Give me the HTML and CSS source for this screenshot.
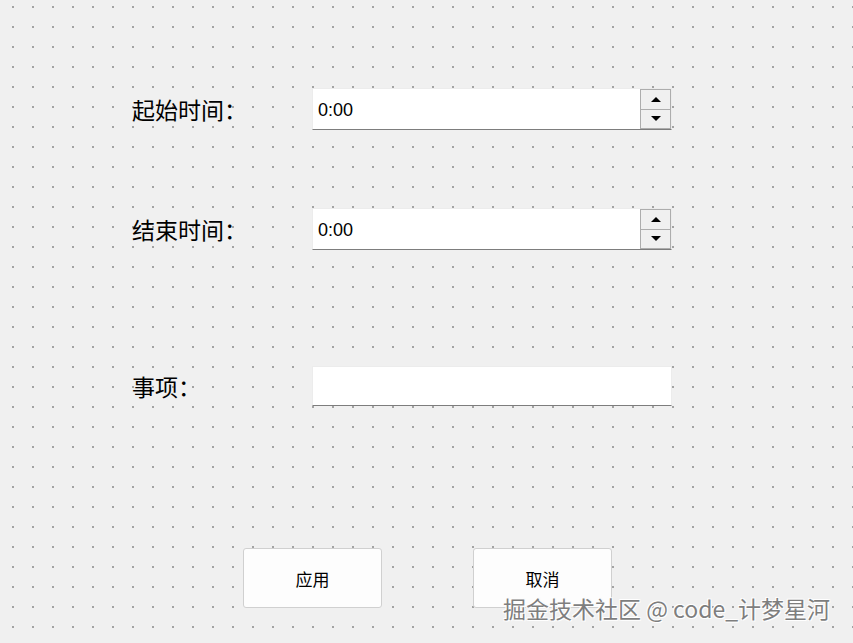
FILE: index.html
```html
<!DOCTYPE html>
<html lang="zh-CN">
<head>
    <meta charset="UTF-8">
    <title>事项设置</title>
    <link rel="stylesheet" href="styles.css">
</head>
<body>
<main class="form">
    <div class="row row-start">
        <label class="label">起始时间：</label>
        <div class="field">
            <input class="field-input" type="text" value="0:00">
            <div class="spin">
                <span class="spin-btn"><i class="arrow up"></i></span>
                <span class="spin-btn"><i class="arrow down"></i></span>
            </div>
        </div>
    </div>
    <div class="row row-end">
        <label class="label">结束时间：</label>
        <div class="field">
            <input class="field-input" type="text" value="0:00">
            <div class="spin">
                <span class="spin-btn"><i class="arrow up"></i></span>
                <span class="spin-btn"><i class="arrow down"></i></span>
            </div>
        </div>
    </div>
    <div class="row row-item">
        <label class="label">事项：</label>
        <div class="field field-plain">
            <input class="field-input" type="text" value="">
        </div>
    </div>
    <div class="actions">
        <button class="button">应用</button>
        <button class="button">取消</button>
    </div>
</main>
<p class="watermark">掘金技术社区 @ code_计梦星河</p>
</body>
</html>
```

FILE: styles.css
```css
html, body {
    height: 100%;
}
body {
    margin: 0;
    padding: 0;
    background-color: #f0f0f0;
    background-image: conic-gradient(at 2px 2px, transparent 75%, #a3a3a3 0);
    background-size: 20px 20px;
    background-position: 12px 6px;
    font-family: 'Noto Sans CJK SC', sans-serif;
    color: #000;
    position: relative;
    overflow: hidden;
}
.form {
    padding: 88px 0 0 132px;
}
.row {
    display: flex;
    align-items: center;
    height: 42px;
}
.row-start {
    margin-bottom: 78px;
}
.row-end {
    margin-bottom: 116px;
}
.row-item {
    height: 40px;
}
.label {
    width: 180px;
    font-size: 23px;
    line-height: 1;
}
.field {
    position: relative;
    width: 360px;
    height: 100%;
    box-sizing: border-box;
    background: #fff;
    border: 1px solid #ececec;
    border-bottom-color: #7d7d7d;
}
.field-input {
    width: 100%;
    height: 100%;
    box-sizing: border-box;
    border: none;
    outline: none;
    background: transparent;
    padding: 2px 0 0 5px;
    font-family: 'Liberation Sans', sans-serif;
    font-size: 18px;
    color: #000;
}
.spin {
    position: absolute;
    top: 0;
    right: 0;
    width: 31px;
    height: 40px;
    box-sizing: border-box;
    border: 1px solid #adadad;
    display: flex;
    flex-direction: column;
}
.spin-btn {
    flex: 1;
    display: flex;
    justify-content: center;
    align-items: center;
    background: #f0f0f0;
}
.spin-btn + .spin-btn {
    border-top: 1px solid #adadad;
}
.arrow {
    width: 0;
    height: 0;
    border-left: 5px solid transparent;
    border-right: 5px solid transparent;
}
.arrow.up {
    border-bottom: 5px solid #000;
}
.arrow.down {
    border-top: 5px solid #000;
}
.actions {
    display: flex;
    gap: 91px;
    margin: 142px 0 0 111px;
}
.button {
    width: 139px;
    height: 60px;
    background: #fdfdfd;
    border: 1px solid #d0d0d0;
    border-radius: 3px;
    font-family: 'Noto Sans CJK SC', sans-serif;
    font-size: 17px;
    color: #000;
    padding: 0;
}
.watermark {
    position: absolute;
    left: 503px;
    top: 594px;
    margin: 0;
    font-size: 23px;
    line-height: 1.3;
    color: #7e7e7e;
    text-shadow: 1px 1px 0 #fff, -1px -1px 0 #fff, 1px -1px 0 #fafafa, -1px 1px 0 #fafafa;
    white-space: nowrap;
}
```
